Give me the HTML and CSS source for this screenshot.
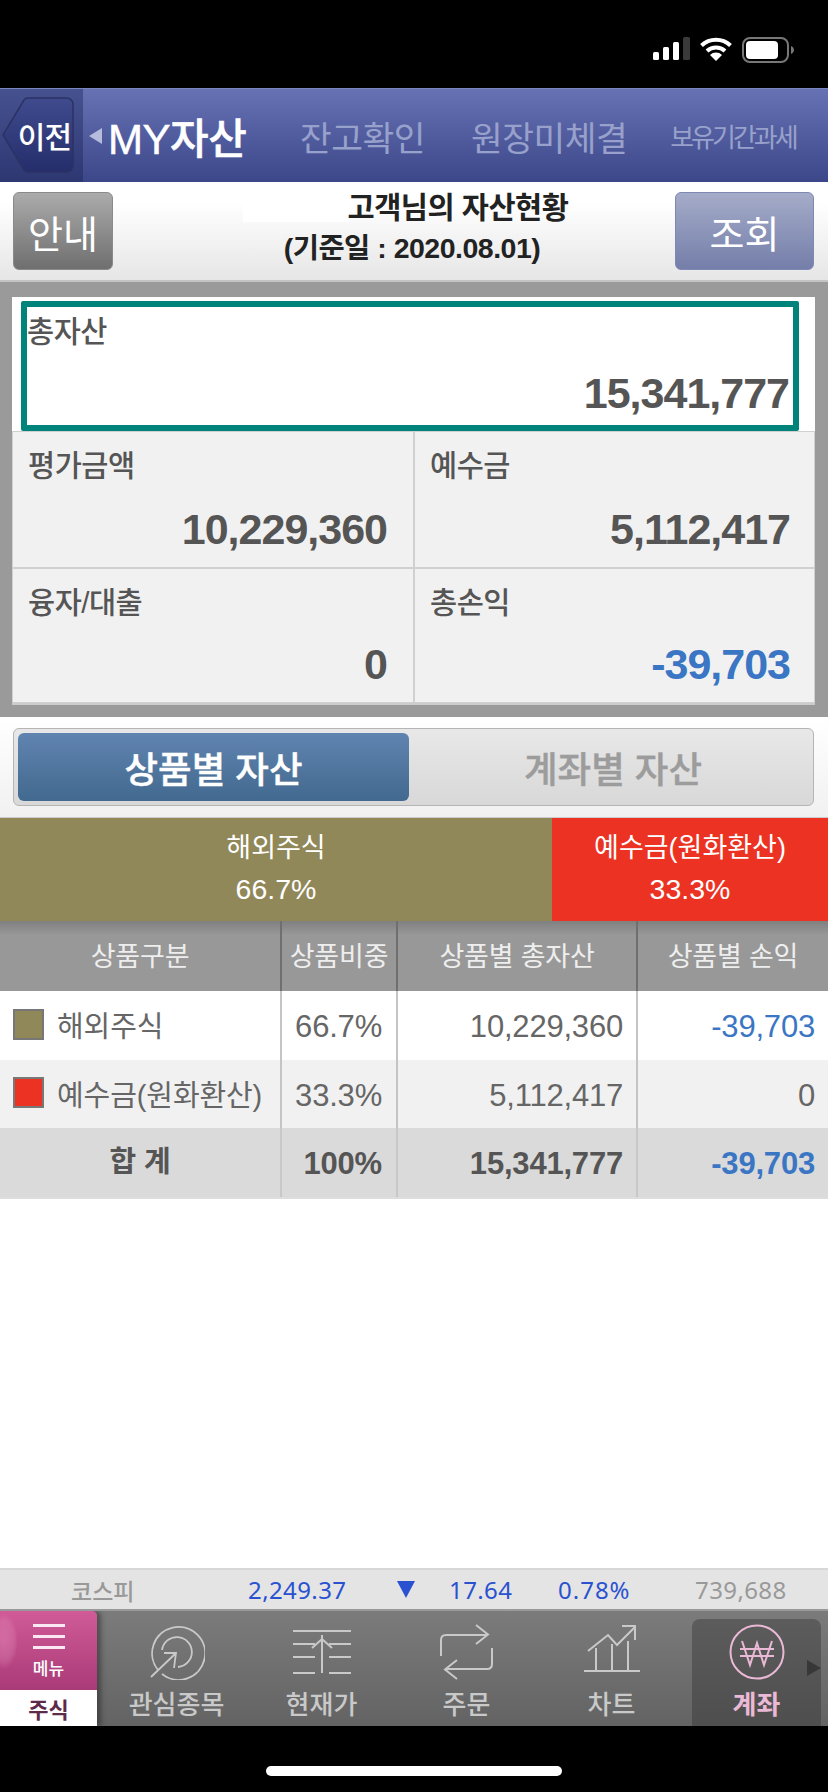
FILE: index.html
```html
<!DOCTYPE html>
<html lang="ko">
<head>
<meta charset="utf-8">
<title>MY자산</title>
<link rel="stylesheet" href="styles.css">
</head>
<body>
<div class="phone">
  <div class="status">
    <svg class="signal" width="37" height="23" viewBox="0 0 37 23"><rect x="0" y="15" width="6" height="8" rx="1.5" fill="#fff"/><rect x="10" y="10" width="6" height="13" rx="1.5" fill="#fff"/><rect x="20" y="5" width="6" height="18" rx="1.5" fill="#fff"/><rect x="30" y="0" width="7" height="23" rx="1.5" fill="#3a3a3a"/></svg>
    <svg class="wifi" width="32" height="24" viewBox="0 0 32 24"><path d="M1.5 8.5a21 21 0 0 1 29 0" fill="none" stroke="#fff" stroke-width="4"/><path d="M7 14a13 13 0 0 1 18 0" fill="none" stroke="#fff" stroke-width="4"/><path d="M16 24l-6-6a8.5 8.5 0 0 1 12 0z" fill="#fff"/></svg>
    <svg class="battery" width="52" height="26" viewBox="0 0 52 26"><rect x="1" y="1" width="45" height="24" rx="7" fill="none" stroke="#777" stroke-width="2"/><rect x="4" y="4" width="32" height="18" rx="4" fill="#fff"/><path d="M49 9c2 1 3 2.500 3 4s-1 3-3 4z" fill="#777"/></svg>
  </div>

  <nav class="topnav">
    <div class="back-wrap">
      <a class="back">
        <svg class="back-shape" width="72" height="76" viewBox="0 0 72 76"><defs><linearGradient id="bk" x1="0" y1="0" x2="0" y2="1"><stop offset="0" stop-color="#3f4b8e"/><stop offset="1" stop-color="#252e6b"/></linearGradient></defs><path d="M1 38L22 3Q23.500 1 26 1H64Q71 1 71 8V68Q71 75 64 75H26Q23.500 75 22 73Z" fill="url(#bk)" stroke="#2b3264" stroke-width="1.500"/></svg>
        <span class="back-text">이전</span>
      </a>
    </div>
    <span class="nav-arrow"></span>
    <span class="nav-title">MY자산</span>
    <span class="nav-item n1">잔고확인</span>
    <span class="nav-item n2">원장미체결</span>
    <span class="nav-item n3">보유기간과세</span>
  </nav>

  <div class="toolbar">
    <button class="btn btn-gray">안내</button>
    <div class="heading">
      <div class="heading-1">고객님의 자산현황</div>
      <div class="heading-2">(기준일 : 2020.08.01)</div>
    </div>
    <button class="btn btn-blue">조회</button>
  </div>

  <section class="summary-wrap">
    <div class="summary">
      <div class="cell total">
        <div class="cell-label">총자산</div>
        <div class="cell-value">15,341,777</div>
      </div>
      <div class="cell left">
        <div class="cell-label">평가금액</div>
        <div class="cell-value">10,229,360</div>
      </div>
      <div class="cell">
        <div class="cell-label">예수금</div>
        <div class="cell-value">5,112,417</div>
      </div>
      <div class="cell left">
        <div class="cell-label">융자/대출</div>
        <div class="cell-value">0</div>
      </div>
      <div class="cell">
        <div class="cell-label">총손익</div>
        <div class="cell-value minus">-39,703</div>
      </div>
    </div>
  </section>

  <div class="tabs-wrap">
    <div class="tabs">
      <div class="tab active">상품별 자산</div>
      <div class="tab">계좌별 자산</div>
    </div>
  </div>

  <div class="ratio">
    <div class="ratio-a">해외주식<br><span class="pct">66.7%</span></div>
    <div class="ratio-b">예수금(원화환산)<br><span class="pct">33.3%</span></div>
  </div>

  <div class="grid">
    <div class="g-row g-head">
      <div class="c c1 ctr">상품구분</div>
      <div class="c c2 ctr">상품비중</div>
      <div class="c c3 ctr">상품별 총자산</div>
      <div class="c c4 ctr">상품별 손익</div>
    </div>
    <div class="g-row g-white">
      <div class="c c1 name"><i class="sw sw-a"></i>해외주식</div>
      <div class="c c2 num">66.7%</div>
      <div class="c c3 num">10,229,360</div>
      <div class="c c4 num minus">-39,703</div>
    </div>
    <div class="g-row g-light">
      <div class="c c1 name"><i class="sw sw-b"></i>예수금(원화환산)</div>
      <div class="c c2 num">33.3%</div>
      <div class="c c3 num">5,112,417</div>
      <div class="c c4 num">0</div>
    </div>
    <div class="g-row g-sum">
      <div class="c c1 ctr sum-label">합 계</div>
      <div class="c c2 num">100%</div>
      <div class="c c3 num">15,341,777</div>
      <div class="c c4 num minus">-39,703</div>
    </div>
  </div>

  <div class="spacer"></div>

  <div class="ticker">
    <span class="t t-name">코스피</span>
    <span class="t t-idx">2,249.37</span>
    <span class="t t-tri"></span>
    <span class="t t-chg">17.64</span>
    <span class="t t-pct">0.78%</span>
    <span class="t t-vol">739,688</span>
  </div>

  <div class="tabbar">
    <div class="menu">
      <div class="menu-top">
        <span class="burger"><i></i><i></i><i></i></span>
        <span class="menu-text">메뉴</span>
      </div>
      <div class="menu-bottom">주식</div>
    </div>
    <div class="bar-tab">
      <svg width="56" height="56" viewBox="0 0 56 56" fill="none" stroke="#c9c9c9" stroke-width="1.800"><path d="M9 46A26.500 26.500 0 1 1 13 50"/><path d="M13 26A15 15 0 1 1 29 43"/><path d="M2 53L27 29M15 29H27L25 44"/></svg>
      <span>관심종목</span>
    </div>
    <div class="bar-tab">
      <svg width="58" height="56" viewBox="0 0 58 56" fill="none" stroke="#c9c9c9" stroke-width="2"><path d="M0 7H58M0 20H22M36 20H58M0 33H22M36 33H58M0 49H22M36 49H58"/><path d="M29 49V11M19 24L29 15L39 24"/></svg>
      <span>현재가</span>
    </div>
    <div class="bar-tab">
      <svg width="54" height="56" viewBox="0 0 54 56" fill="none" stroke="#c9c9c9" stroke-width="2"><path d="M1 32V16Q1 11 6 11H47M36 1L48 10.500L36 20"/><path d="M52 24V40Q52 45 47 45H6M17 36L5 45.500L17 55"/></svg>
      <span>주문</span>
    </div>
    <div class="bar-tab">
      <svg width="56" height="56" viewBox="0 0 56 56" fill="none" stroke="#c9c9c9" stroke-width="2"><path d="M4 27L24 11L33 21L51 3M38 2H51V16"/><path d="M0 47H56M12 47V24M28 47V20M44 47V17"/></svg>
      <span>차트</span>
    </div>
    <div class="bar-tab on">
      <svg width="56" height="56" viewBox="0 0 56 56" fill="none" stroke="#eab9d5" stroke-width="2"><circle cx="28" cy="28" r="26.500"/><path d="M13 17L21 41L28 19L35 41L43 17M11 25H45M11 32H45"/></svg>
      <span>계좌</span>
      <i class="more"></i>
    </div>
  </div>

  <div class="home"><i></i></div>
</div>
</body>
</html>
```
FILE: styles.css
```css
* { box-sizing: border-box; }
html, body { margin: 0; padding: 0; background: #fff; }
body { font-family: "Liberation Sans", "Noto Sans CJK KR", sans-serif; }
.phone { width: 828px; height: 1792px; display: flex; flex-direction: column; overflow: hidden; background: #fff; }

/* status */
.status { height: 88px; background: #000; flex: none; display: flex; align-items: flex-start; padding: 37px 0 0 653px; }
.signal { margin-right: 10px; }
.wifi { margin-right: 10px; }

/* top nav */
.topnav { height: 94px; flex: none; display: flex; align-items: center; background: linear-gradient(#6672b4, #3c478a); border-top: 1px solid #7a85bd; color: #fff; }
.back-wrap { width: 83px; height: 100%; flex: none; background: linear-gradient(#465290, #2d3772); padding: 8px 0 0 2px; }
.back { display: flex; position: relative; width: 72px; height: 76px; align-items: center; justify-content: flex-end; padding-right: 3px; }
.back-shape { position: absolute; left: 0; top: 0; }
.back-text { position: relative; font-size: 30px; font-weight: 500; letter-spacing: -1px; color: #fff; }
.nav-arrow { width: 0; height: 0; flex: none; margin-left: 6px; border-style: solid; border-width: 8px 13px 8px 0; border-color: transparent #b5bcdc transparent transparent; }
.nav-title { flex: none; margin-left: 6px; width: 192px; font-size: 42px; font-weight: 500; letter-spacing: -.5px; white-space: nowrap; -webkit-text-stroke: .5px #fff; }
.nav-item { flex: none; font-size: 34.500px; color: #98a1cb; white-space: nowrap; letter-spacing: -.5px; }
.n2 { margin-left: 46px; }
.n3 { margin-left: 43px; font-size: 26px; letter-spacing: -3px; }

/* toolbar */
.toolbar { position: relative; height: 100px; flex: none; display: flex; align-items: flex-start; padding: 10px 14px 0 13px; background: linear-gradient(#fff 20%, #e6e6e6); border-bottom: 2px solid #c4c4c4; }
.toolbar::before { content: ""; position: absolute; left: 243px; top: 10px; width: 106px; height: 30px; background: #fff; }
.btn { height: 78px; border-radius: 6px; color: #fff; font-family: inherit; font-size: 38px; padding: 0; flex: none; position: relative; }
.btn-gray { width: 100px; background: linear-gradient(#ababab, #6f6f6f); border: 1px solid #8a8a8a; }
.btn-blue { width: 139px; background: linear-gradient(#a5acc9, #747ea9); border: 1px solid #7e88b3; }
.heading { flex: 1; text-align: center; font-weight: 700; color: #222; position: relative; }
.heading-1 { font-size: 29.500px; line-height: 32px; margin: 0 0 0 128px; letter-spacing: -.5px; }
.heading-2 { font-size: 28.500px; line-height: 32px; margin: 8px 0 0 36px; letter-spacing: -.5px; white-space: nowrap; }

/* summary */
.summary-wrap { height: 435px; flex: none; background: #9a9a9a; padding: 15px 13px 14px 12px; }
.summary { display: grid; grid-template-columns: 402px 401px; grid-template-rows: 134px 137px 135px; background: #fff; border-bottom: 2px solid #ccc; }
.cell { background: #f1f1f1; border: 1px solid #d0d0d0; padding: 15px 24px 15px 15px; display: flex; flex-direction: column; justify-content: space-between; }
.cell.left { padding-right: 26px; }
.total { grid-column: 1 / 3; background: #fff; border: 6px solid #00837b; border-radius: 2px; margin: 4px 16px 0 9px; padding: 6px 4px 9px 0; }
.cell-label { font-size: 29.500px; line-height: 38px; color: #555; letter-spacing: -.5px; font-weight: 500; }
.cell-value { text-align: right; font-size: 43px; line-height: 46px; font-weight: 700; color: #555; letter-spacing: -1px; }
.minus { color: #3a76c4 !important; }

/* segmented */
.tabs-wrap { height: 100px; flex: none; padding: 11px 14px 0 13px; background: linear-gradient(#fff, #f1f1f1); }
.tabs { height: 78px; display: flex; border: 1px solid #b5b5b5; border-radius: 6px; padding: 4px; background: linear-gradient(#e8e8e8, #d8d8d8); }
.tab { flex: 1; display: flex; align-items: center; justify-content: center; padding-left: 8px; font-size: 36.500px; font-weight: 500; color: #9c9c9c; -webkit-text-stroke: .4px currentColor; }
.tab.active { flex: none; width: 391px; padding-left: 0; color: #fff; border-radius: 6px; background: linear-gradient(#6084b0, #42698f); }

/* ratio */
.ratio { height: 104px; flex: none; display: flex; color: #fff; font-size: 27px; line-height: 41px; text-align: center; border-top: 1px solid #ccc; }
.ratio-a { width: 552px; background: #91885a; padding-top: 10px; }
.ratio-b { flex: 1; background: #ec3323; padding-top: 10px; }
.pct { font-size: 28.500px; }

/* grid */
.grid { flex: none; border-bottom: 2px solid #ddd; }
.g-row { display: flex; height: 68.500px; }
.c { display: flex; align-items: center; font-size: 31px; color: #666; border-right: 2px solid #c4c4c4; white-space: nowrap; letter-spacing: -.2px; }
.c1 { width: 282px; font-size: 29px; }
.c2 { width: 116px; }
.c3 { width: 240px; }
.c4 { flex: 1; border-right: 0; }
.ctr { justify-content: center; }
.num { justify-content: flex-end; padding-right: 14px; padding-top: 4px; }
.c4.num { padding-right: 13px; }
.c3.num { padding-right: 13px; }
.name { padding-left: 13px; padding-bottom: 2px; letter-spacing: -.1px; }
.sw { width: 31px; height: 31px; flex: none; margin-right: 13px; border: 2px solid #777; }
.sw-a { background: #91885a; }
.sw-b { background: #ec3323; }
.g-head { height: 70px; background: linear-gradient(#808080 0, #989898 20%, #989898); }
.g-head .c { color: #eee; font-size: 27px; border-right-color: #6f6f6f; padding-bottom: 4px; }
.g-white { background: #fff; }
.g-light { background: #f1f1f1; }
.g-sum { background: #dadada; }
.g-sum .c { font-weight: 700; color: #555; border-right-color: #c8c8c8; }
.sum-label { padding-bottom: 6px; font-size: 29px !important; }

.spacer { flex: 1; }

/* ticker */
.ticker { height: 43px; flex: none; display: flex; align-items: center; background: #e4e4e4; border-top: 2px solid #d8d8d8; border-bottom: 2px solid #999; font-family: "Noto Sans", "Noto Sans CJK KR", sans-serif; font-size: 24px; color: #2a52d0; letter-spacing: .4px; white-space: nowrap; }
.t { flex: none; }
.t-name { margin-left: 71px; width: 177px; color: #999; font-size: 23px; font-weight: 500; letter-spacing: 0; }
.t-idx { width: 149px; }
.t-tri { width: 0; height: 0; border-style: solid; border-width: 17px 9.500px 0; border-color: #2a52d0 transparent transparent; }
.t-chg { margin-left: 34px; width: 109px; }
.t-pct { width: 137px; letter-spacing: 1px; }
.t-vol { color: #999; }

/* bottom tab bar */
.tabbar { height: 115px; flex: none; display: flex; background: linear-gradient(#7b7b7b, #636363); padding-right: 0; overflow: hidden; }
.menu { width: 97px; flex: none; margin-right: 7px; display: flex; flex-direction: column; box-shadow: 4px 0 5px rgba(0,0,0,.35); border-top-right-radius: 5px; overflow: hidden; }
.menu-top { height: 79px; display: flex; flex-direction: column; align-items: center; padding-top: 13px; background: radial-gradient(ellipse 14px 28px at 4px 30px, rgba(235,150,195,.4) 0, rgba(235,150,195,.25) 70%, transparent 100%), linear-gradient(#d05b98, #a93b78); }
.burger { display: flex; flex-direction: column; gap: 8px; width: 32px; }
.burger i { display: block; height: 3px; background: #fbe8f2; }
.menu-text { font-size: 17px; line-height: 20px; font-weight: 500; color: #fff; margin-top: 11px; }
.menu-bottom { flex: 1; background: #fff; color: #5e2a4a; font-size: 22px; font-weight: 700; display: flex; align-items: center; justify-content: center; }
.bar-tab { position: relative; width: 145px; flex: none; display: flex; flex-direction: column; align-items: center; padding-top: 13px; color: #c9c9c9; font-size: 26px; font-weight: 500; }
.bar-tab span { margin-top: 10px; line-height: 30px; white-space: nowrap; }
.bar-tab.on { color: #eab9d5; font-weight: 700; }
.bar-tab.on::before { content: ""; position: absolute; left: 8px; width: 129px; top: 8px; bottom: 0; border-radius: 8px 8px 0 0; background: linear-gradient(#5c5c5c, #4e4e4e); }
.bar-tab.on svg, .bar-tab.on span { position: relative; }
.more { position: absolute; right: 8px; top: 49px; width: 0; height: 0; border-style: solid; border-width: 8px 0 8px 14px; border-color: transparent transparent transparent #383838; }

/* home */
.home { height: 66px; flex: none; background: #000; display: flex; justify-content: center; padding-top: 40px; }
.home i { display: block; width: 296px; height: 10px; border-radius: 5px; background: #fff; }
```
